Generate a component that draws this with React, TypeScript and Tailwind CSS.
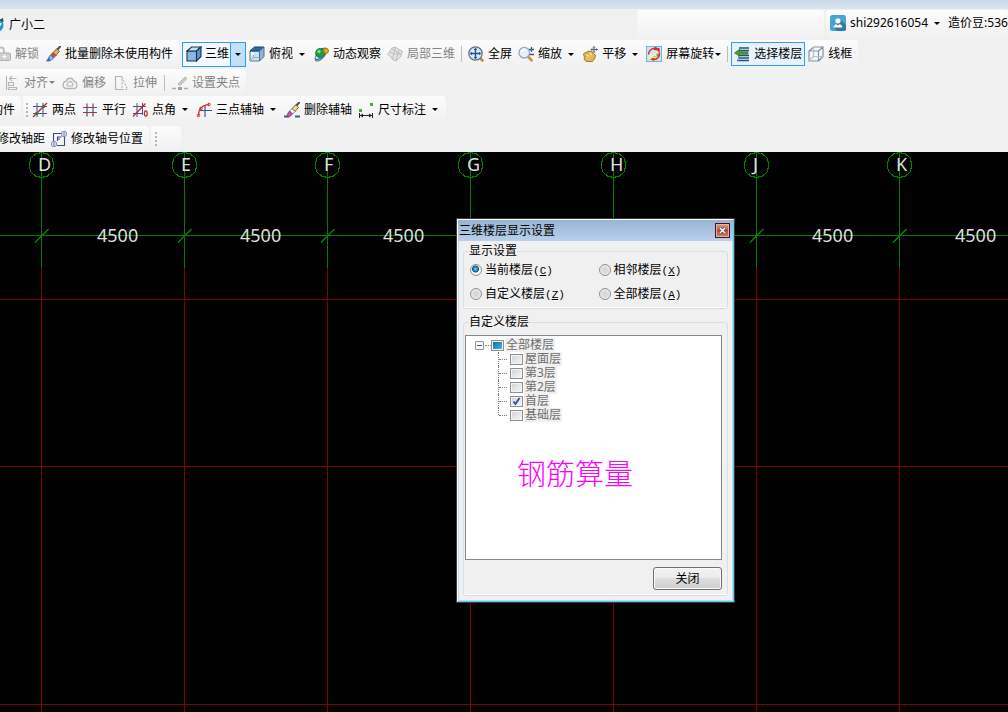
import { useState } from "react";
import type { ReactNode } from "react";

const axes = [
  { label: "D", x: 41 },
  { label: "E", x: 184 },
  { label: "F", x: 327 },
  { label: "G", x: 470 },
  { label: "H", x: 613 },
  { label: "J", x: 756 },
  { label: "K", x: 899 },
];

const redRows = [147, 314, 552];

const displayModes = [
  { id: "current", text: "当前楼层", accessKey: "C" },
  { id: "adjacent", text: "相邻楼层", accessKey: "X" },
  { id: "custom", text: "自定义楼层", accessKey: "Z" },
  { id: "all", text: "全部楼层", accessKey: "A" },
];

const floors = [
  { id: "roof", text: "屋面层", checked: false },
  { id: "f3", text: "第3层", checked: false },
  { id: "f2", text: "第2层", checked: false },
  { id: "f1", text: "首层", checked: true },
  { id: "base", text: "基础层", checked: false },
];

function Svg({ children }: { children: ReactNode }) {
  return (
    <svg viewBox="0 0 16 16" className="h-4 w-4 shrink-0" fill="none" aria-hidden="true">
      {children}
    </svg>
  );
}

function LockIcon() {
  return (
    <Svg>
      <path d="M3 7V4.5a3 3 0 0 1 6 0V7" stroke="#bdbdbd" strokeWidth="1.8" />
      <rect x="4" y="7" width="11.5" height="7.5" rx="1" fill="#cfcfcf" stroke="#b0b0b0" />
      <path d="M9.5 8.5v4M7.5 10.5h4" stroke="#fff" strokeWidth="1.2" />
    </Svg>
  );
}

function BrushIcon({ line = false }: { line?: boolean }) {
  return (
    <Svg>
      {line && <path d="M0 14.5h5M11 14.5h5" stroke="#3b5f86" strokeWidth="2" />}
      <path d="M15 .8 11.500 4.500" stroke="#4a4a58" strokeWidth="2" strokeLinecap="round" />
      <path d="M11.800 2.800 14.500 5.300 11 9.500 8 6.500z" fill={line ? "#f3d98b" : "#e8b04e"} stroke="#6b4426" strokeWidth=".8" />
      <path d="M8 6.500 11 9.500 8.500 12 5.500 9z" fill={line ? "#f4f4f8" : "#d9442f"} stroke="#555a70" strokeWidth=".7" />
      <path d="M5.500 9 8.500 12 6 14.500 2.500 14.800 4 11z" fill={line ? "#cf4fa0" : "#8dbdea"} stroke={line ? "#74406a" : "#2d6cb0"} strokeWidth=".8" />
      {!line && <path d="M.5 15.200c1.500-1 2-2.500 3.500-4l1.500 3.300c-1.500 1-3.500.9-5 .7z" fill="#2f74bf" />}
    </Svg>
  );
}

function CubeIcon() {
  return (
    <Svg>
      <path d="M1 5h9.500v10H1z" fill="#8ab8e4" stroke="#1d3550" strokeWidth="1.100" />
      <path d="M1 5 5.500 1H15l-4.500 4z" fill="#c5dff5" stroke="#1d3550" strokeWidth="1.100" />
      <path d="M10.500 5 15 1v9.500L10.500 15z" fill="#5f93c6" stroke="#1d3550" strokeWidth="1.100" />
    </Svg>
  );
}

function TopViewIcon() {
  return (
    <Svg>
      <path d="M1 5h9.500v10H1z" fill="#cbe2f3" stroke="#5c7c9c" />
      <path d="M1 5 5.500 1H15l-4.500 4z" fill="#35699d" stroke="#1d4068" />
      <path d="M10.500 5 15 1v9.500L10.500 15z" fill="#8db4d6" stroke="#4a6f94" />
      <path d="M4.500 6v5.500h6M4.500 11.500 1 15" stroke="#8fa9c4" />
      <path d="M2 6h3v3H2z" fill="#fff" />
    </Svg>
  );
}

function OrbitIcon() {
  return (
    <Svg>
      <ellipse cx="8" cy="8.500" rx="8" ry="3.600" transform="rotate(-50 8 8.500)" fill="#cfe3ef" stroke="#4b7d9e" />
      <circle cx="7.300" cy="7" r="4.600" fill="#1d9a3c" stroke="#0b6626" strokeWidth=".8" />
      <circle cx="6" cy="5.500" r="1.700" fill="#79e08b" />
      <circle cx="13" cy="4.800" r="2.600" fill="#e7a51d" stroke="#946008" strokeWidth=".7" />
      <path d="M2 13.500c3 .8 7.500-1.700 10-5.500" stroke="#3d7393" strokeWidth="1.300" />
    </Svg>
  );
}

function LocalCubeIcon() {
  return (
    <Svg>
      <path d="M.8 8.500 5 2l3.500-.8L11 3l4.500 2.500-2 5.500L9 15l-3.500-1.500L4 11z" fill="#e4e4e4" stroke="#bcbcbc" />
      <path d="m3 6 4 2 7 0M8.500 1.500 5.500 13M12 4 9 14.500M5 3l8.500 5" stroke="#bdbdbd" />
    </Svg>
  );
}

function FullScreenIcon() {
  return (
    <Svg>
      <path d="m12 12 2.500 2.500" stroke="#c98a3a" strokeWidth="2.600" strokeLinecap="round" />
      <circle cx="7.500" cy="7.500" r="6.700" fill="#dbe9f8" stroke="#5c7390" strokeWidth="1.300" />
      <path d="M7.500 2.500v10M2.500 7.500h10" stroke="#274f93" strokeWidth="1.400" />
      <path d="m5.700 4 1.800-2.200L9.300 4zM5.700 11l1.800 2.200L9.300 11zM4 5.700 1.800 7.500 4 9.300zM11 5.700l2.200 1.800L11 9.300z" fill="#274f93" />
    </Svg>
  );
}

function ZoomIcon() {
  return (
    <Svg>
      <path d="m10 10.500 3.500 3.800" stroke="#cf9440" strokeWidth="2.800" strokeLinecap="round" />
      <circle cx="6.300" cy="6.700" r="5.300" fill="#e6eff8" stroke="#94a7bb" strokeWidth="1.300" />
      <path d="M3.500 6a3 3 0 0 1 3-2.500" stroke="#fff" strokeWidth="1.500" />
      <path d="M13.500 1v5M11 3.500h5M11.500 8.500H16" stroke="#3a5a86" strokeWidth="1.300" />
    </Svg>
  );
}

function PanIcon() {
  return (
    <Svg>
      <path d="M1.500 8 3 6.500l1.500.5L6 5l2 .5L9.500 5 11 7.500 13.500 9 13 12l-2.500 3.500H4.500L2 13l.5-1.500z" fill="#e0b85c" stroke="#94702a" strokeWidth=".9" />
      <path d="m4.500 8.500 2.500 2M7.500 7l2.500 2.200" stroke="#fbe5a5" strokeWidth="1.200" />
      <path d="M12 .5v6M9 3.500h6.500M11 1.500 12 .5l1 1M11 5.500l1 1 1-1M10 2.500l-1 1 1 1M14.500 2.500l1 1-1 1" stroke="#4b6079" />
    </Svg>
  );
}

function RotateIcon() {
  return (
    <Svg>
      <rect x=".5" y=".5" width="15" height="15" fill="#c9e7f6" stroke="#74b3d6" />
      <path d="M2 11 5 8l2 1.500 5-4 1.500 6L9 13H3z" fill="#f7f3b0" />
      <path d="M7 10h3.500V7.500H13v3H7z" fill="#6cae4e" />
      <path d="M2.500 8.500C2.500 5 5 2.500 8.500 2.500M13.500 6.500c.5 4-2 7-6 7" stroke="#e12a2a" strokeWidth="1.400" />
      <path d="M8 .8 13.800 2.500 13.500 7 11 4.300 8 4zM8.500 11.500 7.800 15 4 13z" fill="#e12a2a" />
    </Svg>
  );
}

function FloorsIcon() {
  return (
    <Svg>
      <path d="M5 2h10M5 4.500h10M5 9.500h10M4 12h11M3 14.500h12" stroke="#24517c" strokeWidth="1.300" />
      <path d="M4.500 9v6" stroke="#7fa7cb" />
      <path d="m.5 7 5-3.800v2.600H14v2.400H5.500v2z" fill="#4a9f33" stroke="#26691a" strokeWidth=".6" />
    </Svg>
  );
}

function WireIcon() {
  return (
    <Svg>
      <path d="M1 5h9.500v10H1zM1 5l4.500-4H15l-4.500 4M15 1v9.500L10.500 15" stroke="#7f92b2" strokeWidth="1.200" />
      <path d="M5.500 1v9.500H15M5.500 10.500 1 15" stroke="#b3c0d6" strokeWidth="1.200" />
    </Svg>
  );
}

function AlignIcon() {
  return (
    <Svg>
      <path d="M2.500 1v14M4.500 7.500h5v3h-5zM4.500 12.500h8v2h-8z" stroke="#b5b5b5" strokeWidth="1.100" />
      <path d="M12.500 3.500H6M8 1 5.500 3.500 8 6" stroke="#b9b9b9" strokeWidth="1.200" />
    </Svg>
  );
}

function OffsetIcon() {
  return (
    <Svg>
      <path d="M4.500 6a3.600 3.600 0 0 1 7 0c4.500 1 4.500 7.500 0 7.500h-7C0 13.500 0 7 4.500 6z" stroke="#b5b5b5" strokeWidth="1.300" />
      <path d="M6.500 7.500a1.600 1.600 0 0 1 3 0c2 1 2 3.500 0 3.500h-3c-2 0-2-2.500 0-3.500z" stroke="#b5b5b5" strokeWidth="1.200" />
    </Svg>
  );
}

function StretchIcon() {
  return (
    <Svg>
      <path d="M9 1.500H2.500v13H9" stroke="#b5b5b5" strokeWidth="1.200" />
      <path d="M9 2 14.500 14.500H9z" stroke="#b5b5b5" strokeWidth="1.200" strokeDasharray="2 1.500" />
    </Svg>
  );
}

function GripIcon() {
  return (
    <Svg>
      <path d="M0 13.500h4M12 13.500h4" stroke="#adadad" strokeWidth="1.300" />
      <path d="M6 12h4v3H6z" fill="#a0a0a0" />
      <path d="m6 9 7-7 2 1.500-7 7z" fill="#c9c9c9" stroke="#b8b8b8" />
    </Svg>
  );
}

function TwoPointIcon() {
  return (
    <Svg>
      <path d="M5 1v14M11 1v14M1 4.500h14M1 11.500h14" stroke="#4a4f8f" />
      <path d="m1 15 14-14" stroke="#a3262a" strokeWidth="1.200" />
      <circle cx="11.500" cy="4.500" r="1.700" fill="#3f7a26" />
      <circle cx="4.700" cy="11.500" r="1.700" fill="#3f7a26" />
    </Svg>
  );
}

function ParallelIcon() {
  return (
    <Svg>
      <path d="M5 1.500v13M11 1.500v13" stroke="#4a4f8f" strokeWidth="1.200" />
      <path d="M1 5.500h14M1 10.500h14" stroke="#a8373c" strokeWidth="1.200" />
    </Svg>
  );
}

function PointAngleIcon() {
  return (
    <Svg>
      <path d="M5 1v14M10.500 1v12M1 4.500h13M1 11.500h10" stroke="#4a4f8f" />
      <path d="M1 14.500 13.500 1.500" stroke="#c0262a" strokeWidth="1.200" />
      <ellipse cx="13.800" cy="11.500" rx="1.400" ry="2.600" stroke="#c0262a" strokeWidth="1.200" />
    </Svg>
  );
}

function ThreePointIcon() {
  return (
    <Svg>
      <path d="M9 3v12M3 8.500h13" stroke="#4a4f8f" strokeWidth="1.200" />
      <path d="M2.500 13.500C2.500 7 6 3 13 2.500" stroke="#c8322f" strokeWidth="1.200" />
      <circle cx="13" cy="2.500" r="1.300" stroke="#c8322f" />
      <circle cx="5" cy="6.500" r="1.300" stroke="#c8322f" />
      <circle cx="2.500" cy="13.500" r="1.300" stroke="#c8322f" />
    </Svg>
  );
}

function DimensionIcon() {
  return (
    <Svg>
      <path d="M1 7h3v3H1zM12 1h3v3h-3z" fill="#4aa84a" />
      <path d="M1.500 11v5M14.500 11v5M2 13.500h12" stroke="#222" />
      <path d="m5 11.500-3 2 3 2zM11 11.500l3 2-3 2z" fill="#222" />
    </Svg>
  );
}

function AxisNumberIcon() {
  return (
    <Svg>
      <path d="M2.500 10V2.500H10M13.500 6v8.500H6M6.500 10V6h4M6.500 8h2.500" stroke="#3c4b7c" strokeWidth="1.100" />
      <circle cx="13" cy="3" r="2.700" fill="#d8e8fb" stroke="#6f92cf" />
      <circle cx="3" cy="13" r="2.700" fill="#d8e8fb" stroke="#6f92cf" />
      <path d="M13 1.500v3M3 11.500v3" stroke="#c03a4a" />
    </Svg>
  );
}

function AssistantIcon() {
  return (
    <Svg>
      <circle cx="8" cy="8" r="7.500" fill="#1f97d8" />
      <path d="M5 8.500c3 3 7 1 8-2.500M10 3.500l3.500-1.500" stroke="#fff" strokeWidth="1.600" />
      <path d="m11 3 4-2 .5 4z" fill="#23425f" />
    </Svg>
  );
}

function UserIcon() {
  return (
    <Svg>
      <rect width="16" height="16" rx="2.500" fill="#4aa3d3" />
      <path d="m10 4 6 6v3.500a2.500 2.500 0 0 1-2.500 2.500H7l-3-3z" fill="#3079a8" />
      <circle cx="8" cy="5.800" r="2.600" fill="#fff" />
      <path d="M3.500 12.500c0-2 2-3 3-3.200L8 10.500l1.500-1.200c1 .2 3 1.200 3 3.200z" fill="#fff" />
    </Svg>
  );
}

function Caret() {
  return <span className="h-0 w-0 border-x-[3px] border-t-[3px] border-x-transparent border-t-current" />;
}

type ItemProps = {
  icon?: ReactNode;
  text: string;
  arrow?: "wide" | "tight";
  disabled?: boolean;
  pressed?: boolean;
  className?: string;
};

function Item({ icon, text, arrow, disabled, pressed, className = "" }: ItemProps) {
  return (
    <button
      type="button"
      disabled={disabled}
      className={`flex h-6 shrink-0 items-center ${disabled ? "text-[#838383]" : "text-black"} ${
        pressed ? "border border-[#3399ff] bg-[#e8f2fc] px-[2px]" : "px-[3px]"
      } ${className}`}
    >
      {icon && <span className="mr-1">{icon}</span>}
      <span>{text}</span>
      {arrow && (
        <span className={`flex justify-center ${arrow === "wide" ? "w-[14px] pl-1" : "w-[7px]"}`}>
          <Caret />
        </span>
      )}
    </button>
  );
}

function Bar({ children, className = "" }: { children?: ReactNode; className?: string }) {
  return (
    <div
      className={`flex h-full shrink-0 items-center rounded-r-sm bg-gradient-to-b from-[#fcfcfc] to-[#f0f0f0] pr-[3px] ${className}`}
    >
      {children}
    </div>
  );
}

function Separator() {
  return <span className="mx-[3px] h-4 w-px shrink-0 bg-[#bdbdbd]" />;
}

function Handle() {
  return (
    <span className="mr-px ml-[3px] flex flex-col gap-[2px]">
      <i className="h-[2px] w-[2px] bg-[#b4b4b4]" />
      <i className="h-[2px] w-[2px] bg-[#b4b4b4]" />
      <i className="h-[2px] w-[2px] bg-[#b4b4b4]" />
      <i className="h-[2px] w-[2px] bg-[#b4b4b4]" />
    </span>
  );
}

function Toolbars() {
  return (
    <header className="shrink-0 overflow-hidden whitespace-nowrap">
      <div className="h-[9px] bg-gradient-to-b from-[#cad8e7] to-[#dae5f1]" />
      <div className="flex h-[31px] items-center gap-[2px] pt-px">
        <div className="-ml-3 flex items-center gap-1">
          <AssistantIcon />
          <span className="pl-px">广小二</span>
        </div>
        <Bar className="ml-auto w-[187px] rounded-l-sm" />
        <Bar className="w-[182px] overflow-hidden rounded-l-sm pb-1 pl-px">
          <Item icon={<UserIcon />} text="shi292616054" arrow="wide" />
          <Item text="造价豆:536" />
        </Bar>
      </div>
      <div className="flex h-7 gap-[2px]">
        <Bar>
          <Item icon={<LockIcon />} text="解锁" disabled className="-ml-2" />
          <Item icon={<BrushIcon />} text="批量删除未使用构件" />
        </Bar>
        <Bar className="pl-px">
          <div className="flex h-[25px] border border-[#3399ff] bg-[#f4f9fe]">
            <button type="button" className="flex items-center gap-[3px] pr-px pl-[3px]">
              <CubeIcon />
              三维
            </button>
            <button
              type="button"
              aria-label="三维选项"
              className="flex w-[15px] items-center justify-center border-l border-[#3399ff] bg-[#c2dffc]"
            >
              <Caret />
            </button>
          </div>
          <Item icon={<TopViewIcon />} text="俯视" arrow="wide" />
          <Item icon={<OrbitIcon />} text="动态观察" />
          <Item icon={<LocalCubeIcon />} text="局部三维" disabled />
          <Separator />
          <Item icon={<FullScreenIcon />} text="全屏" />
          <Item icon={<ZoomIcon />} text="缩放" arrow="wide" />
          <Item icon={<PanIcon />} text="平移" arrow="wide" />
          <Item icon={<RotateIcon />} text="屏幕旋转" arrow="tight" />
          <Separator />
          <Item icon={<FloorsIcon />} text="选择楼层" pressed />
          <Item icon={<WireIcon />} text="线框" />
        </Bar>
      </div>
      <div className="flex h-7 pt-px">
        <Bar className="gap-px pl-px">
          <Item icon={<AlignIcon />} text="对齐" arrow="tight" disabled />
          <Item icon={<OffsetIcon />} text="偏移" disabled />
          <Item icon={<StretchIcon />} text="拉伸" disabled />
          <Separator />
          <Item icon={<GripIcon />} text="设置夹点" disabled />
        </Bar>
      </div>
      <div className="flex h-[27px] gap-[2px]">
        <Bar>
          <Item text="构件" className="-ml-3" />
        </Bar>
        <Bar>
          <Handle />
          <Item icon={<TwoPointIcon />} text="两点" />
          <Item icon={<ParallelIcon />} text="平行" />
          <Item icon={<PointAngleIcon />} text="点角" arrow="wide" />
          <Item icon={<ThreePointIcon />} text="三点辅轴" arrow="wide" />
          <Item icon={<BrushIcon line />} text="删除辅轴" />
          <Item icon={<DimensionIcon />} text="尺寸标注" arrow="wide" />
        </Bar>
      </div>
      <div className="flex h-[29px] gap-[2px] pt-[3px]">
        <Bar>
          <Item text="修改轴距" className="-ml-[6px]" />
          <Item icon={<AxisNumberIcon />} text="修改轴号位置" />
        </Bar>
        <Bar className="w-[30px] pl-px">
          <Handle />
        </Bar>
      </div>
    </header>
  );
}

function Drawing() {
  return (
    <svg className="absolute inset-0 h-full w-full" role="img" aria-label="轴网">
      <g shapeRendering="crispEdges" fill="none">
        {redRows.map((y) => (
          <line key={y} x1="0" x2="100%" y1={y + 0.5} y2={y + 0.5} stroke="#800000" />
        ))}
        <line x1="0" x2="100%" y1="83.5" y2="83.5" stroke="#008000" />
        {axes.map(({ label, x }) => (
          <g key={label}>
            <line x1={x + 0.5} x2={x + 0.5} y1="116" y2="100%" stroke="#800000" />
            <line x1={x + 0.5} x2={x + 0.5} y1="0" y2="116" stroke="#008000" />
            <g transform={`translate(${x + 0.5} 13)`} stroke="#008000">
              <polygon points="-12.500,0 -10.500,-7 -6,-11 0,-12.500 6,-11 10.500,-7 12.500,0 10.500,7 6,11 0,12.500 -6,11 -10.500,7" />
              <line x1="-6.500" y1="77.500" x2="7" y2="64" />
            </g>
          </g>
        ))}
      </g>
      <g fill="#dedede" className="font-['Noto_Sans'] text-lg">
        {axes.map(({ label, x }) => (
          <g key={label}>
            <text x={x - 3} y="19">
              {label}
            </text>
            <text x={x + 56} y="90">
              4500
            </text>
          </g>
        ))}
      </g>
    </svg>
  );
}

const boxBase =
  "m-0 h-[11px] w-[13px] shrink-0 appearance-none border border-[#8e8f8f] bg-gradient-to-br from-[#cfd2d6] to-[#f8f8f8] shadow-[inset_0_0_0_1px_#f4f4f4]";

function FloorTree() {
  const [checked, setChecked] = useState(() => floors.filter((f) => f.checked).map((f) => f.id));

  const toggle = (id: string) =>
    setChecked((prev) => (prev.includes(id) ? prev.filter((v) => v !== id) : [...prev, id]));

  return (
    <div className="h-[225px] border border-[#828790] bg-white pt-[2px] pl-[9px] text-[#6d6d6d]">
      <div className="flex h-[14px] items-center">
        <button
          type="button"
          aria-label="折叠"
          className="flex h-[9px] w-[9px] items-center justify-center rounded-[1px] border border-[#919191] bg-[#fafafa]"
        >
          <span className="h-px w-[5px] bg-[#3a56a4]" />
        </button>
        <span className="ml-px w-[6px] border-t border-dotted border-[#808080]" />
        <span className="relative flex">
          <input id="floor-root" type="checkbox" className={boxBase} />
          <span className="pointer-events-none absolute inset-x-[2px] inset-y-[2px] bg-gradient-to-br from-[#1b6f9f] to-[#3fb6e0]" />
        </span>
        <label htmlFor="floor-root" className="ml-px bg-[#f0f0f0] px-px leading-[14px]">
          全部楼层
        </label>
      </div>
      <ul className="ml-[23px]">
        {floors.map((floor, i) => (
          <li key={floor.id} className="flex h-[14px] items-center">
            <span
              className={`w-px border-l border-dotted border-[#808080] ${
                i === floors.length - 1 ? "h-[7px] self-start" : "h-full"
              }`}
            />
            <span className="mr-[3px] w-2 border-t border-dotted border-[#808080]" />
            <span className="relative flex">
              <input
                id={floor.id}
                type="checkbox"
                checked={checked.includes(floor.id)}
                onChange={() => toggle(floor.id)}
                className={boxBase}
              />
              {checked.includes(floor.id) && (
                <svg viewBox="0 0 13 11" className="pointer-events-none absolute inset-0 h-full w-full" fill="none">
                  <path d="m3.500 5.500 2 2.500 4-6" stroke="#31489b" strokeWidth="1.800" />
                </svg>
              )}
            </span>
            <label htmlFor={floor.id} className="ml-px bg-[#f0f0f0] px-px leading-[14px]">
              {floor.text}
            </label>
          </li>
        ))}
      </ul>
      <p className="mt-8 ml-[42px] text-[29px] leading-10 font-light text-[#ff00ff]">钢筋算量</p>
    </div>
  );
}

function FloorDialog() {
  const [mode, setMode] = useState("current");

  return (
    <section
      role="dialog"
      aria-labelledby="dialog-title"
      className="absolute top-[66px] left-[456px] w-[279px] border border-[#3c3c3c] text-black"
    >
      <div className="border border-t-white border-r-[#4fd0f5] border-b-[#4fd0f5] border-l-white bg-[#f0f0f0]">
        <div className="flex h-[21px] items-center justify-between bg-gradient-to-b from-[#98b4d4] to-[#b8d0ea] pr-[3px] pl-px">
          <h1 id="dialog-title">三维楼层显示设置</h1>
          <button
            type="button"
            aria-label="关闭窗口"
            className="flex h-[15px] w-[15px] items-center justify-center border border-[#431422] bg-gradient-to-b from-[#e0a093] via-[#bd4a35] to-[#cf7a68] shadow-[inset_0_0_0_1px_#e3b0a8]"
          >
            <svg viewBox="0 0 9 9" className="h-[9px] w-[9px]" aria-hidden="true">
              <path d="m2 2 5 5M7 2 2 7" stroke="#4b5462" strokeWidth="3" />
              <path d="m2 2 5 5M7 2 2 7" stroke="#fff" strokeWidth="1.600" />
            </svg>
          </button>
        </div>
        <div className="border-x border-b border-[#c3d6ea] px-1 pt-[3px] pb-1">
          <fieldset className="min-w-0 rounded-[3px] border border-[#d5dfe5] pb-[2px] shadow-[inset_0_-1px_0_#fff]">
            <legend className="ml-[5px] leading-[14px]">显示设置</legend>
            <div className="grid grid-cols-2 pl-[6px]">
              {displayModes.map((m) => (
                <label key={m.id} className="flex h-6 items-center gap-[3px]">
                  <input
                    type="radio"
                    name="display-mode"
                    checked={mode === m.id}
                    onChange={() => setMode(m.id)}
                    className="m-0 h-3 w-3 shrink-0 appearance-none rounded-full border border-[#8e8f8f] bg-[radial-gradient(circle,#d6d8db_30%,#fbfbfb)] checked:bg-[radial-gradient(circle_at_45%_40%,#5cc6f0_8%,#12507e_38%,#f4f4f4_48%)]"
                  />
                  <span>
                    {m.text}
                    <span className="font-['Liberation_Mono'] text-[11px]">
                      (<u>{m.accessKey}</u>)
                    </span>
                  </span>
                </label>
              ))}
            </div>
          </fieldset>
          <fieldset className="mt-[6px] min-w-0 rounded-[3px] border border-[#d5dfe5] px-px pb-[5px] shadow-[inset_0_-1px_0_#fff]">
            <legend className="ml-1 leading-[14px]">自定义楼层</legend>
            <div className="pt-[6px] pr-1">
              <FloorTree />
              <button
                type="button"
                className="mt-[7px] ml-auto block h-[23px] w-[69px] rounded-[3px] border border-[#707070] bg-[linear-gradient(#f2f2f2,#ebebeb_50%,#dddddd_50%,#cfcfcf)] shadow-[inset_0_0_0_1px_#fafafa]"
              >
                关闭
              </button>
            </div>
          </fieldset>
        </div>
      </div>
    </section>
  );
}

export default function App() {
  return (
    <div className="flex h-screen flex-col overflow-hidden bg-[#f0f0f0] font-['Noto_Sans','Noto_Sans_CJK_SC',sans-serif] text-xs leading-4 text-black">
      <Toolbars />
      <main className="relative flex-1 overflow-hidden bg-black">
        <Drawing />
        <FloorDialog />
      </main>
    </div>
  );
}
